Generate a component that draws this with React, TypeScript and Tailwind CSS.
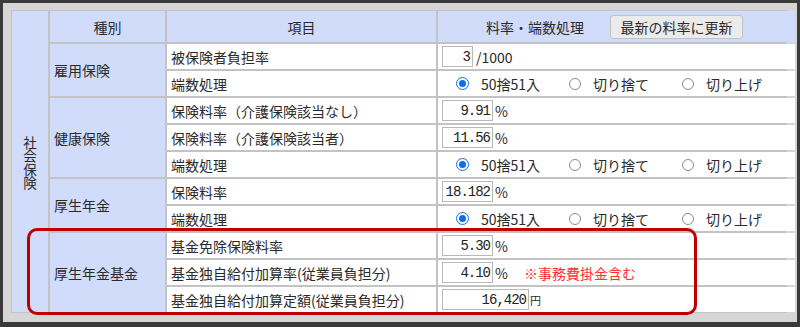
import React from 'react';

const cellBlue = 'bg-[#d0dcfa]';

function Radio({ checked }: { checked?: boolean }) {
  if (checked) {
    return (
      <span className="w-[13px] h-[13px] rounded-full border-[1.5px] border-[#0b6ff0] bg-white flex items-center justify-center shrink-0">
        <span className="w-[7px] h-[7px] rounded-full bg-[#0b6ff0]" />
      </span>
    );
  }
  return <span className="w-[12px] h-[12px] rounded-full border border-[#8a8a8a] bg-white shrink-0" />;
}

function Box({ value, w }: { value: string; w: string }) {
  return (
    <div
      className={`${w} h-[21px] border border-[#b8b8b8] bg-white flex items-center justify-end pr-[2px] text-[14px] tracking-[-1px] text-[#222]`}
      style={{ fontFamily: '"Liberation Mono", "DejaVu Sans Mono", monospace' }}
    >
      {value}
    </div>
  );
}

function Rounding() {
  const opts = ['50捨51入', '切り捨て', '切り上げ'];
  return (
    <div className="flex pl-[14px]">
      {opts.map((o, i) => (
        <div key={o} className="w-[113px] flex items-center gap-[12px]">
          <Radio checked={i === 0} />
          <span>{o}</span>
        </div>
      ))}
    </div>
  );
}

export default function App() {
  const label = `bg-white flex items-center pl-[4px] col-start-3`;
  const value = `bg-white flex items-center pl-[4px] col-start-4`;
  const cat = `${cellBlue} flex items-center pl-[4px] col-start-2`;

  return (
    <div
      className="relative w-[800px] h-[327px] bg-[#d6d6d6] border-[3px] border-b-[5px] border-[#3a3a3a] pt-[7px] pl-[8px] pr-[10px] pb-[9px] text-[14px] leading-[20px] text-[#2a2a2a]"
      style={{ fontFamily: '"Noto Sans CJK JP", "Noto Sans", sans-serif' }}
    >
      <div className="grid grid-cols-[36px_115px_269px_1fr] grid-rows-[31px_repeat(10,25px)] gap-[2px] bg-[#c3c3c3] p-px">
        {/* 社会保険 */}
        <div className={`${cellBlue} row-start-1 row-end-12 col-start-1 flex items-center justify-center pt-[2px]`}>
          <span className="[writing-mode:vertical-rl] [text-orientation:upright] text-[13.5px] leading-[16px]">社会保険</span>
        </div>

        {/* header */}
        <div className={`${cellBlue} col-start-2 flex items-center justify-center`}>種別</div>
        <div className={`${cellBlue} col-start-3 flex items-center justify-center`}>項目</div>
        <div className={`${cellBlue} col-start-4 flex items-center justify-center gap-[26px] pr-[4px]`}>
          <span>料率・端数処理</span>
          <button className="w-[133px] h-[24px] bg-[#ebebeb] border border-[#c2c2c2] rounded-[3px] text-[14px] text-[#2a2a2a]">
            最新の料率に更新
          </button>
        </div>

        {/* 雇用保険 */}
        <div className={`${cat} row-span-2`}>雇用保険</div>
        <div className={label}>被保険者負担率</div>
        <div className={value}>
          <Box value="3" w="w-[31px]" />
          <span className="ml-[3px]">/1000</span>
        </div>
        <div className={label}>端数処理</div>
        <div className={value}>
          <Rounding />
        </div>

        {/* 健康保険 */}
        <div className={`${cat} row-span-3`}>健康保険</div>
        <div className={label}>保険料率（介護保険該当なし）</div>
        <div className={value}>
          <Box value="9.91" w="w-[51px]" />
          <span className="ml-[2px]">%</span>
        </div>
        <div className={label}>保険料率（介護保険該当者）</div>
        <div className={value}>
          <Box value="11.56" w="w-[51px]" />
          <span className="ml-[2px]">%</span>
        </div>
        <div className={label}>端数処理</div>
        <div className={value}>
          <Rounding />
        </div>

        {/* 厚生年金 */}
        <div className={`${cat} row-span-2`}>厚生年金</div>
        <div className={label}>保険料率</div>
        <div className={value}>
          <Box value="18.182" w="w-[51px]" />
          <span className="ml-[2px]">%</span>
        </div>
        <div className={label}>端数処理</div>
        <div className={value}>
          <Rounding />
        </div>

        {/* 厚生年金基金 */}
        <div className={`${cat} row-span-3`}>厚生年金基金</div>
        <div className={label}>基金免除保険料率</div>
        <div className={value}>
          <Box value="5.30" w="w-[51px]" />
          <span className="ml-[2px]">%</span>
        </div>
        <div className={label}>基金独自給付加算率(従業員負担分)</div>
        <div className={value}>
          <Box value="4.10" w="w-[51px]" />
          <span className="ml-[2px]">%</span>
          <span className="ml-[16px] text-[#ff3030]">※事務費掛金含む</span>
        </div>
        <div className={label}>基金独自給付加算定額(従業員負担分)</div>
        <div className={value}>
          <Box value="16,420" w="w-[87px]" />
          <span className="ml-[1px] text-[11px]">円</span>
        </div>
      </div>

      {/* highlight */}
      <div className="absolute left-[24px] top-[225px] w-[670px] h-[87px] border-[3px] border-[#c00000] rounded-[10px] pointer-events-none" />
    </div>
  );
}
